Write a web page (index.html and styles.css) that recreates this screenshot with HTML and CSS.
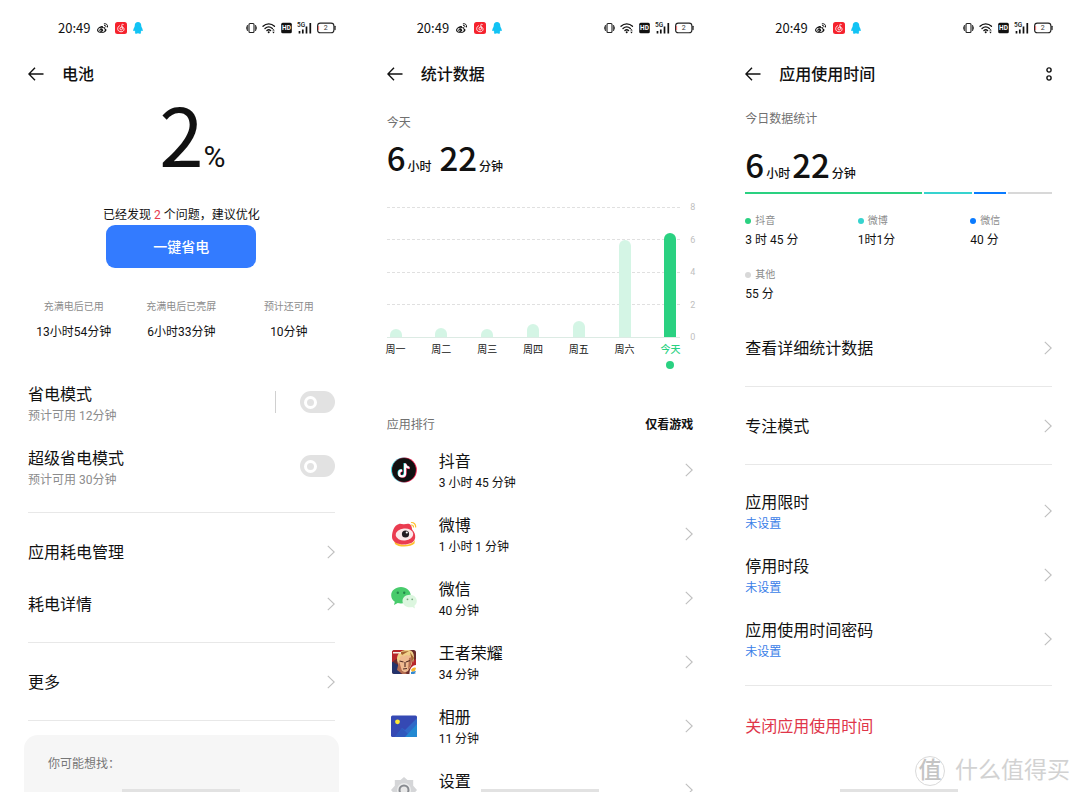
FILE: index.html
```html
<!DOCTYPE html>
<html lang="zh-CN">
<head>
<meta charset="utf-8">
<meta name="viewport" content="width=device-width, initial-scale=1">
<title>电池与应用使用时间</title>
<link rel="stylesheet" href="styles.css">
</head>
<body>
<svg class="defs" aria-hidden="true">
  <symbol id="weibo" viewBox="0 0 24 24">
    <path fill="#111" d="M10 8C5 9 1 13 1 16.500c0 3 4 5.500 9 5.500 6 0 10-3 10-6 0-2-1.500-2.800-3-3.200.6-2-.3-3.300-4-2C13.500 9 12.500 7.500 10 8z"/>
    <ellipse cx="10" cy="16" rx="6.500" ry="4.300" fill="#fff"/><circle cx="9.500" cy="16.300" r="3.600" fill="#111"/><circle cx="8.500" cy="16.500" r="1.200" fill="#fff"/>
    <path d="M15.500 3.500c4-1 7.500 2 6.700 6.500M16 7c2-.4 3.300.8 2.900 2.700" fill="none" stroke="#111" stroke-width="2" stroke-linecap="round"/>
  </symbol>
  <symbol id="netease" viewBox="0 0 24 24">
    <rect width="24" height="24" rx="5" fill="#f5222d"/>
    <path d="M16.500 4.800c-2-1-3.300.2-3 1.800l1.300 6c.4 2.200-1 3.200-2.500 3.200s-2.800-1.200-2.300-3.200c.5-2.300 3.300-3.300 5.600-2.300 4 1.800 3.400 9.200-3.300 9.200-8 0-9.300-9-3.300-12" fill="none" stroke="#fff" stroke-width="1.800" stroke-linecap="round"/>
  </symbol>
  <symbol id="qq" viewBox="0 0 20 24">
    <path fill="#12c3f4" d="M10 0c-4 0-6.500 3-6.500 7 0 1-.2 2-.6 3C1.500 12.500.5 15 .5 17c0 1.500 1.200 1.500 2.600-.2.300 1.400 1 2.400 1.900 3.300-2 1-1.700 3.400 1.300 3.400 1.700 0 2.900-.5 3.700-1 .8.500 2 1 3.700 1 3 0 3.300-2.400 1.300-3.400.9-.9 1.600-1.900 1.900-3.300 1.400 1.700 2.600 1.700 2.600.2 0-2-1-4.500-2.400-7-.4-1-.6-2-.6-3 0-4-2.500-7-6.500-7z"/>
  </symbol>
  <symbol id="vibrate" viewBox="0 0 11 12">
    <rect x="3" y="1.500" width="5" height="9" rx="1" fill="none" stroke="#222" stroke-width="1.100"/>
    <path d="M1.400 3v6M9.600 3v6M.3 4.500v3M10.700 4.500v3" stroke="#222" stroke-width=".9"/>
  </symbol>
  <symbol id="wifi" viewBox="0 0 14 12">
    <path d="M1 4.300c3.300-3.200 8.200-3.200 11.500 0M3 6.500c2.200-2 5.200-2 7.400 0M4.900 8.500c1.200-1 2.500-1 3.700 0" fill="none" stroke="#111" stroke-width="1.300" stroke-linecap="round"/>
    <circle cx="6.700" cy="10.300" r="1" fill="#111"/><path d="M10.300 8.600l1.200-1.600 1.200 1.600zM10.300 9.800l1.200 1.600 1.200-1.600z" fill="#111"/>
  </symbol>
  <symbol id="hd" viewBox="0 0 11 11">
    <rect x=".2" y=".2" width="10.600" height="10.600" rx="1.500" fill="#111"/>
    <text x="5.500" y="7.900" text-anchor="middle" font-family="Roboto, sans-serif" font-size="6.500" font-weight="700" fill="#fff">HD</text>
  </symbol>
  <symbol id="signal" viewBox="0 0 15 12">
    <text x="0" y="5" font-family="Roboto, sans-serif" font-size="6.500" font-weight="500" fill="#111">5G</text>
    <path d="M2.500 9v2.500M5.800 7.500v4M9.500 4.500v7M13.300 1v10.500" stroke="#111" stroke-width="1.700"/>
  </symbol>
  <symbol id="battery" viewBox="0 0 19 12">
    <rect x=".6" y="1.100" width="16.300" height="9.600" rx="2.800" fill="none" stroke="#222" stroke-width="1.100"/>
    <path d="M1.600 4v4" stroke="#e55" stroke-width=".8"/><path d="M18 4.300v3.200" stroke="#222" stroke-width="1.300" stroke-linecap="round"/>
    <text x="8.800" y="8.300" text-anchor="middle" font-family="Roboto, sans-serif" font-size="7" fill="#333">2</text>
  </symbol>
  <symbol id="back" viewBox="0 0 16 14">
    <path d="M15.500 7H1M7 .8L.9 7 7 13.200" fill="none" stroke="#111" stroke-width="1.400"/>
  </symbol>
  <symbol id="chevron" viewBox="0 0 8 14">
    <path d="M.8.800L7.200 7 .8 13.200" fill="none" stroke="#bfbfbf" stroke-width="1.100"/>
  </symbol>
</svg>

<main class="screens">
  <section class="screen" aria-label="电池">
    <div class="status">
      <span class="time">20:49</span>
      <svg class="i13"><use href="#weibo"/></svg><svg class="i12"><use href="#netease"/></svg><svg class="i10"><use href="#qq"/></svg>
      <span class="system"><svg class="i11"><use href="#vibrate"/></svg><svg class="i14"><use href="#wifi"/></svg><svg class="i11"><use href="#hd"/></svg><svg class="i15"><use href="#signal"/></svg><svg class="i19"><use href="#battery"/></svg></span>
    </div>
    <header class="bar"><button class="back" type="button" aria-label="返回"><svg><use href="#back"/></svg></button><h1>电池</h1></header>
    <p class="level"><span>2</span><small>%</small></p>
    <p class="notice">已经发现 <em>2</em> 个问题，建议优化</p>
    <button class="primary" type="button">一键省电</button>
    <dl class="stats">
      <div><dt>充满电后已用</dt><dd>13小时54分钟</dd></div>
      <div><dt>充满电后已亮屏</dt><dd>6小时33分钟</dd></div>
      <div><dt>预计还可用</dt><dd>10分钟</dd></div>
    </dl>
    <div class="group first">
      <div class="row tall"><label class="text" for="saver"><span class="name">省电模式</span><span class="sub">预计可用 12分钟</span></label><span class="rule"></span><input class="switch" id="saver" type="checkbox"></div>
      <div class="row tall"><label class="text" for="super"><span class="name">超级省电模式</span><span class="sub">预计可用 30分钟</span></label><input class="switch" id="super" type="checkbox"></div>
    </div>
    <div class="group">
      <a class="row" href="#usage"><span class="text name">应用耗电管理</span><svg class="chevron"><use href="#chevron"/></svg></a>
      <a class="row" href="#detail"><span class="text name">耗电详情</span><svg class="chevron"><use href="#chevron"/></svg></a>
    </div>
    <div class="group">
      <a class="row" href="#more"><span class="text name">更多</span><svg class="chevron"><use href="#chevron"/></svg></a>
    </div>
    <aside class="suggest">你可能想找：</aside>
    <span class="home"></span>
  </section>

  <section class="screen" aria-label="统计数据">
    <div class="status">
      <span class="time">20:49</span>
      <svg class="i13"><use href="#weibo"/></svg><svg class="i12"><use href="#netease"/></svg><svg class="i10"><use href="#qq"/></svg>
      <span class="system"><svg class="i11"><use href="#vibrate"/></svg><svg class="i14"><use href="#wifi"/></svg><svg class="i11"><use href="#hd"/></svg><svg class="i15"><use href="#signal"/></svg><svg class="i19"><use href="#battery"/></svg></span>
    </div>
    <header class="bar"><button class="back" type="button" aria-label="返回"><svg><use href="#back"/></svg></button><h1>统计数据</h1></header>
    <p class="caption day">今天</p>
    <p class="total spaced"><b>6</b><span>小时</span><b>22</b><span>分钟</span></p>
    <div class="chart">
      <ul class="ticks"><li>8</li><li>6</li><li>4</li><li>2</li><li>0</li></ul>
      <ol class="days">
        <li><span class="track"><i style="height:8px"></i></span>周一</li>
        <li><span class="track"><i style="height:9px"></i></span>周二</li>
        <li><span class="track"><i style="height:8px"></i></span>周三</li>
        <li><span class="track"><i style="height:13px"></i></span>周四</li>
        <li><span class="track"><i style="height:16px"></i></span>周五</li>
        <li><span class="track"><i style="height:97px"></i></span>周六</li>
        <li class="today"><span class="track"><i style="height:104px"></i></span>今天</li>
      </ol>
    </div>
    <div class="rank"><h2>应用排行</h2><button type="button">仅看游戏</button></div>
    <div class="apps">
      <a class="row tall" href="#douyin">
        <svg class="app" viewBox="0 0 26 26"><circle cx="12.500" cy="13" r="12.400" fill="#25d5d8"/><circle cx="13.500" cy="13" r="12.400" fill="#ee2855"/><circle cx="13" cy="13" r="11.900" fill="#111"/>
          <g fill="none" stroke-width="2.100"><path d="M13.500 6v10a3 3 0 1 1-3-3M13.500 6.500c.4 2.300 2 3.700 4.300 3.900" stroke="#25d5d8"/><path d="M14.700 6.800v10a3 3 0 1 1-3-3M14.700 7.300c.4 2.300 2 3.700 4.300 3.900" stroke="#ee2855"/><path d="M14.100 6.400v10a3 3 0 1 1-3-3M14.100 6.900c.4 2.300 2 3.700 4.300 3.900" stroke="#fff"/></g></svg>
        <span class="text"><span class="name">抖音</span><span class="sub">3 小时 45 分钟</span></span><svg class="chevron"><use href="#chevron"/></svg></a>
      <a class="row tall" href="#weibo-app">
        <svg class="app" viewBox="0 0 26 26"><path d="M3 19c3 6 17 7 21 0l-.5 3.500C20 26.500 7 26.500 4 23z" fill="#fdbf2d"/><path d="M1 16C1 11 3 4 8 3c2-.5 3 .5 5 .3C16 3 18 2 20 4.500c1.200 1.600.5 3 1.500 4.500 2 2.500 3 4.500 2.700 7.500-.5 5-6 7-11.500 7S1 21 1 16z" fill="#ea3c50"/><ellipse cx="13.500" cy="13.500" rx="8.800" ry="6" fill="#fbe9ea" transform="rotate(-5 13.500 14)"/><circle cx="14.500" cy="13" r="3.600" fill="#241d22"/><circle cx="15.800" cy="11.500" r="1.100" fill="#fff"/><path d="M20.500 1.500c2.500 0 4.300 1.800 4.200 4.500M20.500 4c1.200 0 2 .8 2 2" fill="none" stroke="#fdbf2d" stroke-width="1.200" stroke-linecap="round"/></svg>
        <span class="text"><span class="name">微博</span><span class="sub">1 小时 1 分钟</span></span><svg class="chevron"><use href="#chevron"/></svg></a>
      <a class="row tall" href="#wechat">
        <svg class="app" viewBox="0 0 26 26"><path d="M10 2C4.400 2 .2 5.600.2 10.300c0 2.700 1.300 4.900 3.600 6.400L3 20l3.700-1.900c1 .3 2.200.4 3.300.4 5.400 0 9.700-3.600 9.700-8.200S15.400 2 10 2z" fill="#48cb6c"/><circle cx="6.800" cy="7.800" r="1.200" fill="#23884a"/><circle cx="13.200" cy="7.800" r="1.200" fill="#23884a"/><path d="M18.800 9.700c-4.200 0-7.300 2.800-7.300 6.300s3.100 6.300 7.300 6.300c.9 0 1.800-.1 2.500-.4l2.700 1.500-.6-2.600c1.500-1.200 2.400-2.900 2.400-4.800 0-3.500-3-6.300-7-6.300z" fill="#dcf6df"/><circle cx="16.500" cy="14.300" r=".9" fill="#79a982"/><circle cx="21.200" cy="14.300" r=".9" fill="#79a982"/></svg>
        <span class="text"><span class="name">微信</span><span class="sub">40 分钟</span></span><svg class="chevron"><use href="#chevron"/></svg></a>
      <a class="row tall" href="#game">
        <svg class="app" viewBox="0 0 26 26"><defs><clipPath id="tile"><rect x="1" y="1" width="24" height="24" rx="2.500"/></clipPath></defs><g clip-path="url(#tile)"><path fill="#6a2c2b" d="M0 0h26v26H0z"/><path fill="#24336b" d="M0 12l7 4 3 10H0z"/><path fill="#b7272b" d="M0 0h13L8 8l-8 6zM19 14l7-5v9l-7 3z"/><path fill="#efbb91" d="M8 7l6-3 6 3 1 8-4 7-4 2-5-5-2-8z"/><path fill="#b66f52" d="M8 12l3 10 5 2-3 2-7-5zM18 9l3-1-1 8-3 5z"/><path fill="#f0d08a" d="M6 10C6 4 11 0 18 1c5 1 6 6 4 13l-2-7-5-1-3 2 1-3-4 3-1 6z"/><path fill="#a56532" d="M9 3l9-1-7 4zM19 3l4 6-2 3z"/><path d="M8.500 12l4 1M15 13l4-1.500M14 13v5M12 20l4-.5" stroke="#553028" stroke-width="1.200"/><path fill="#f5efe4" d="M2 3h8v1.500H2z"/><path fill="#fff" d="M26 16c-5 0-8 4-7.500 10H26z"/><path fill="#f7b52c" d="M20 21c1-2 3-3 5-2l-1 3-3 1z"/><path fill="#318ad2" d="M20 23l5-1-2 4h-3z"/></g></svg>
        <span class="text"><span class="name">王者荣耀</span><span class="sub">34 分钟</span></span><svg class="chevron"><use href="#chevron"/></svg></a>
      <a class="row tall" href="#album">
        <svg class="app" viewBox="0 0 26 26"><defs><clipPath id="photo"><rect y="2.500" width="26" height="21.500" rx="1.500"/></clipPath></defs><g clip-path="url(#photo)"><path fill="#3549b4" d="M0 0h26v26H0z"/><path fill="#3169c8" d="M4 24l7-9 3 2L26 5v19z"/><path fill="#2f58bd" d="M4 24l7-9 9 9z"/><path fill="#2389d2" d="M14 24L26 11v13z"/></g><circle cx="6.500" cy="8.800" r="2.400" fill="#ffe835"/></svg>
        <span class="text"><span class="name">相册</span><span class="sub">11 分钟</span></span><svg class="chevron"><use href="#chevron"/></svg></a>
      <a class="row tall" href="#settings">
        <svg class="app" viewBox="0 0 26 26"><path d="M13 0l3.500 3h5.700v5.700L26 13l-3.800 4.300V23h-5.700L13 26l-3.500-3H3.800v-5.700L0 13l3.800-4.300V3h5.700z" fill="#d5d6d8"/><circle cx="13" cy="13" r="7" fill="#eceded"/><circle cx="13" cy="13" r="4.500" fill="#e8e8e8" stroke="#888b90" stroke-width="2"/></svg>
        <span class="text"><span class="name">设置</span><span class="sub"></span></span><svg class="chevron"><use href="#chevron"/></svg></a>
    </div>
    <span class="home"></span>
  </section>

  <section class="screen" aria-label="应用使用时间">
    <div class="status">
      <span class="time">20:49</span>
      <svg class="i13"><use href="#weibo"/></svg><svg class="i12"><use href="#netease"/></svg><svg class="i10"><use href="#qq"/></svg>
      <span class="system"><svg class="i11"><use href="#vibrate"/></svg><svg class="i14"><use href="#wifi"/></svg><svg class="i11"><use href="#hd"/></svg><svg class="i15"><use href="#signal"/></svg><svg class="i19"><use href="#battery"/></svg></span>
    </div>
    <header class="bar"><button class="back" type="button" aria-label="返回"><svg><use href="#back"/></svg></button><h1>应用使用时间</h1>
      <button class="menu" type="button" aria-label="更多选项"><svg viewBox="0 0 6 14"><g fill="none" stroke="#111" stroke-width="1.400"><circle cx="3" cy="3" r="2.100"/><circle cx="3" cy="11" r="2.100"/></g></svg></button></header>
    <p class="caption">今日数据统计</p>
    <p class="total upper"><b>6</b><span>小时</span><b>22</b><span>分钟</span></p>
    <div class="share"><i class="green" style="flex-grow:177"></i><i class="teal" style="flex-grow:48"></i><i class="blue" style="flex-grow:32"></i><i class="gray" style="flex-grow:44"></i></div>
    <dl class="legend">
      <div><dt><i class="green"></i>抖音</dt><dd>3 时 45 分</dd></div>
      <div><dt><i class="teal"></i>微博</dt><dd>1时1分</dd></div>
      <div><dt><i class="blue"></i>微信</dt><dd>40 分</dd></div>
      <div><dt><i class="gray"></i>其他</dt><dd>55 分</dd></div>
    </dl>
    <div class="group">
      <a class="row" href="#stats"><span class="text name">查看详细统计数据</span><svg class="chevron"><use href="#chevron"/></svg></a>
    </div>
    <div class="group">
      <a class="row" href="#focus"><span class="text name">专注模式</span><svg class="chevron"><use href="#chevron"/></svg></a>
    </div>
    <div class="group roomy links">
      <a class="row tall" href="#limit"><span class="text"><span class="name">应用限时</span><span class="sub">未设置</span></span><svg class="chevron"><use href="#chevron"/></svg></a>
      <a class="row tall" href="#downtime"><span class="text"><span class="name">停用时段</span><span class="sub">未设置</span></span><svg class="chevron"><use href="#chevron"/></svg></a>
      <a class="row tall" href="#passcode"><span class="text"><span class="name">应用使用时间密码</span><span class="sub">未设置</span></span><svg class="chevron"><use href="#chevron"/></svg></a>
    </div>
    <button class="off" type="button">关闭应用使用时间</button>
    <span class="home"></span>
  </section>
</main>
<div class="watermark"><span class="seal">值</span><span>什么值得买</span></div>
</body>
</html>
```
FILE: styles.css
```css
*, *::before, *::after { box-sizing: border-box; }

body {
  margin: 0;
  background: #fff;
  color: #111;
  font-family: Roboto, "Noto Sans CJK SC", sans-serif;
  font-size: 12px;
  line-height: 20px;
}

h1, h2, p, dl, dd, ul, ol { margin: 0; padding: 0; font-weight: 400; }
ul, ol { list-style: none; }
a { color: inherit; text-decoration: none; }
button { border: 0; padding: 0; background: none; color: inherit; font: inherit; cursor: pointer; }
.defs { display: none; }

.screens {
  display: grid;
  grid-template-columns: repeat(3, minmax(0, 1fr));
  height: 100vh;
  padding: 0 2px 4px;
}

.screen {
  position: relative;
  overflow: hidden;
  padding: 18px 26px 0;
}

/* Status bar */
.status {
  display: flex;
  align-items: center;
  gap: 6px;
  height: 20px;
  margin-right: -1px;
  padding-left: 30px;
}
.status svg { height: 12px; }
.time { font: 13px/20px "Noto Sans CJK SC", sans-serif; }
.system { display: flex; gap: 5px; margin-left: auto; }
.i10 { width: 10px; }
.i11 { width: 11px; }
.i12 { width: 12px; }
.i13 { width: 13px; }
.i14 { width: 14px; }
.i15 { width: 15px; }
.i19 { width: 19px; }

/* Title bar */
.bar { display: flex; align-items: center; height: 32px; margin-top: 20px; }
.bar h1 { margin-left: 18px; padding-top: 2px; font-size: 16px; font-weight: 500; }
.back { width: 16px; height: 14px; display: flex; }
.back svg { width: 16px; height: 14px; }
.menu { display: flex; margin-left: auto; }
.menu svg { width: 6px; height: 14px; }

/* Battery summary */
.level {
  display: flex;
  justify-content: center;
  align-items: baseline;
  padding: 0 0 31px 22px;
  font: 80px/84px "Noto Sans CJK SC", sans-serif;
}
.level small { font: 30px/32px Roboto, sans-serif; }
.notice { text-align: center; }
.notice em { color: #e5394d; font-style: normal; }
.primary {
  display: block;
  width: 150px;
  height: 43px;
  margin: 0 auto;
  border-radius: 9px;
  background: #337bff;
  color: #fff;
  font-size: 14px;
  font-weight: 500;
}
.stats {
  display: grid;
  grid-template-columns: repeat(3, 1fr);
  margin: 31px -8px 0;
  text-align: center;
}
.stats dt { margin-bottom: 7px; color: #8c8c8c; font-size: 10px; line-height: 16px; }

/* Setting rows */
.group { padding: 13px 0 12px; border-bottom: 1px solid #e8e8e8; }
.group.first { margin-top: 30px; padding-top: 0; }
.group.roomy { padding: 15px 0 13px; }
.row { display: flex; align-items: center; height: 52px; }
.row.tall { height: 64px; }
.text { flex: 1; padding-top: 2px; }
.name { display: block; font-size: 16px; line-height: 22px; }
.sub { display: block; min-height: 20px; }
.group .sub { color: #8c8c8c; }
.links .sub { color: #3a7ee8; }
.chevron { width: 8px; height: 14px; }
.tall .chevron { margin-bottom: 2px; }
.rule { width: 1px; height: 22px; margin: 0 24px 4px; background: #d0d0d0; }
.switch {
  appearance: none;
  display: flex;
  align-items: center;
  width: 35px;
  height: 22px;
  margin: 0 0 4px;
  padding-left: 4px;
  border-radius: 11px;
  background: #e2e2e2;
}
.switch::before {
  content: "";
  width: 13px;
  height: 13px;
  border: 3px solid #fff;
  border-radius: 50%;
}
.switch:checked { padding-left: 18px; background: #2ad181; }
.suggest {
  height: 80px;
  margin: 14px -4px 0;
  padding: 19px 24px;
  border-radius: 14px;
  background: #f6f6f6;
  color: #777;
}
.home {
  position: absolute;
  bottom: 0;
  left: 50%;
  width: 118px;
  height: 3px;
  margin-left: -59px;
  background: #e2e2e2;
}

/* Usage totals */
.caption { margin-top: 21px; color: #707070; line-height: 16px; }
.caption.day { margin-top: 25px; }
.total {
  display: flex;
  align-items: baseline;
  height: 40px;
  margin-top: 6px;
  font: 500 12px/40px "Noto Sans CJK SC", sans-serif;
}
.total.upper { margin-top: 17px; }
.total b { font-size: 33px; font-weight: 500; }
.total span { margin: 0 2px; }
.total.spaced span { margin-right: 8px; }

/* Weekly chart */
.chart { display: grid; margin-top: 22px; }
.ticks, .days { grid-area: 1 / 1; }
.ticks {
  display: flex;
  flex-direction: column;
  justify-content: space-between;
  height: 146px;
  color: #c0c0c0;
  font-size: 9px;
  line-height: 16px;
}
.ticks li { display: flex; align-items: center; gap: 10px; margin-right: -2px; }
.ticks li::before { content: ""; flex: 1; border-top: 1px dashed #e0e0e0; }
.ticks li:last-child::before { border-top: 1px solid #dcebe4; }
.days {
  display: grid;
  grid-template-columns: repeat(7, 1fr);
  margin-left: -14px;
  font-size: 10px;
  line-height: 16px;
  text-align: center;
}
.track { display: flex; align-items: flex-end; justify-content: center; height: 138px; margin-bottom: 5px; }
.track i { width: 12px; border-radius: 6px 6px 0 0; background: #d4f5e5; }
.today { color: #2ad181; font-weight: 500; }
.today .track i { background: #2ad181; }
.today::after {
  content: "";
  display: block;
  width: 8px;
  height: 8px;
  margin: 3px auto 0;
  border-radius: 50%;
  background: #2ad181;
}

/* App ranking */
.rank { display: flex; justify-content: space-between; margin-top: 46px; }
.rank h2 { color: #707070; font-size: 12px; }
.rank button { font-weight: 700; }
.apps { margin-top: 4px; }
.app { width: 26px; height: 26px; margin: 0 22px 2px 4px; }

/* Usage share */
.share { display: flex; gap: 2px; height: 2px; margin-top: 8px; }
.green { background: #2ad181; }
.teal { background: #36d3cf; }
.blue { background: #0a7bff; }
.gray { background: #d8d8d8; }
.legend {
  display: grid;
  grid-template-columns: 11fr 11fr 8fr;
  row-gap: 17px;
  margin: 19px 0 5px;
}
.legend dt { display: flex; align-items: center; gap: 4px; margin-bottom: 1px; color: #8c8c8c; font-size: 10px; line-height: 16px; }
.legend dt i { width: 6px; height: 6px; border-radius: 50%; }
.off { display: block; margin-top: 15px; color: #e0364a; font-size: 16px; line-height: 52px; }

.watermark {
  position: absolute;
  right: 10px;
  bottom: 9px;
  display: flex;
  align-items: center;
  gap: 10px;
  color: #d2d2d2;
  font-size: 23px;
  line-height: 32px;
}
.seal {
  width: 30px;
  height: 30px;
  border: 1px solid #dadada;
  border-radius: 50%;
  color: #c4c4c4;
  font-weight: 500;
  line-height: 28px;
  text-align: center;
}
```
